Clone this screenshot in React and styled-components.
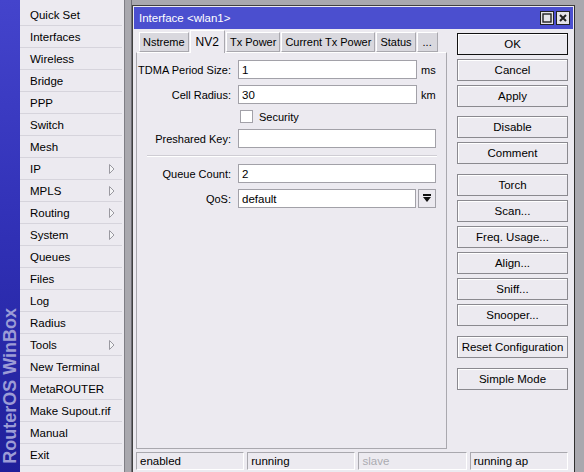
import React from "react";
import styled, { createGlobalStyle } from "styled-components";

const Global = createGlobalStyle`
  html, body { margin: 0; padding: 0; }
  body {
    width: 584px;
    height: 472px;
    overflow: hidden;
    font-family: "Liberation Sans", Arial, sans-serif;
    font-size: 11px;
    color: #000;
  }
`;

const Screen = styled.div`
  display: flex;
  width: 584px;
  height: 472px;
  overflow: hidden;
`;

const Brand = styled.div`
  width: 20px;
  flex: none;
  background: linear-gradient(180deg, #4444cc 0%, #3232b8 45%, #1f1f9a 100%);
  display: flex;
  align-items: flex-end;
  justify-content: center;
  padding-bottom: 8px;
  box-sizing: border-box;
`;

const BrandText = styled.span`
  writing-mode: vertical-rl;
  transform: rotate(180deg);
  font-size: 18px;
  font-weight: bold;
  color: #9c9cd6;
  white-space: nowrap;
`;

const Menu = styled.div`
  width: 104px;
  flex: none;
  background: #eceaf0;
  padding: 4px 2px 0 0;
  box-sizing: border-box;
`;

const MenuItem = styled.div`
  height: 22px;
  box-sizing: border-box;
  border-bottom: 1px solid #d6d4dc;
  display: flex;
  align-items: center;
  justify-content: space-between;
  padding: 0 7px 0 10px;
  white-space: nowrap;
  font-size: 11.5px;
`;

const Gutter = styled.div`
  width: 8px;
  flex: none;
  background: #a9a8ae;
  border-left: 1px solid #7f7e85;
  border-right: 1px solid #6f6e75;
  box-sizing: border-box;
`;

const Desktop = styled.div`
  flex: 1;
  background: #a9a8ae;
  padding-top: 5px;
  box-sizing: border-box;
`;

const Window = styled.div`
  width: 443px;
  height: 470px;
  box-sizing: border-box;
  border: 1px solid #404040;
  border-right-color: #303030;
  background: #eceaf0;
  padding: 1px;
  display: flex;
  flex-direction: column;
`;

const TitleBar = styled.div`
  height: 22px;
  flex: none;
  background: #4b4fcf;
  color: #fff;
  display: flex;
  align-items: center;
  justify-content: space-between;
  padding: 0 3px 0 5px;
`;

const TitleText = styled.span`
  font-size: 11.5px;
`;

const TitleButtons = styled.div`
  display: flex;
  gap: 2px;
`;

const TitleButton = styled.div`
  width: 14px;
  height: 14px;
  box-sizing: border-box;
  background: #e4e3e8;
  border: 1px solid #222;
  display: flex;
  align-items: center;
  justify-content: center;
`;

const Body = styled.div`
  display: grid;
  grid-template-columns: 311px 111px;
  grid-template-rows: 419px 18px;
  column-gap: 10px;
  row-gap: 3px;
  padding: 1px 0 0 2px;
`;

const Main = styled.div`
  display: flex;
  flex-direction: column;
`;

const Tabs = styled.div`
  display: flex;
  align-items: flex-end;
  height: 22px;
  flex: none;
  padding-left: 3px;
  position: relative;
  z-index: 1;
`;

const Tab = styled.div`
  height: ${(p) => (p.$active ? "23px" : "20px")};
  box-sizing: border-box;
  padding: 0 ${(p) => p.$pad || 3}px;
  margin-bottom: ${(p) => (p.$active ? "-1px" : "0")};
  background: ${(p) => (p.$active ? "#eceaf0" : "#d9d8de")};
  border: 1px solid #a9a8ae;
  border-bottom: ${(p) => (p.$active ? "none" : "1px solid #a9a8ae")};
  border-top-color: #fff;
  border-left-color: #fff;
  margin-right: 1px;
  display: flex;
  align-items: center;
  white-space: nowrap;
  font-size: ${(p) => (p.$active ? "12px" : "11px")};
`;

const Panel = styled.div`
  flex: 1;
  border: 1px solid #a9a8ae;
  border-top-color: #fff;
  padding: 7px 9px 0 0;
  display: flex;
  flex-direction: column;
`;

const Row = styled.div`
  display: flex;
  align-items: center;
  height: ${(p) => p.$h || 19}px;
  margin-bottom: ${(p) => p.$mb ?? 6}px;
  font-size: 11px;
`;

const Label = styled.div`
  width: 98px;
  flex: none;
  text-align: right;
  padding-right: 4px;
  box-sizing: border-box;
  white-space: nowrap;
`;

const Input = styled.div`
  width: ${(p) => p.$w || 198}px;
  height: 19px;
  box-sizing: border-box;
  background: #fff;
  border: 1px solid #a2a1a8;
  padding: 0 3px;
  display: flex;
  align-items: center;
  margin-left: 3px;
  font-size: 11.5px;
`;

const Unit = styled.span`
  margin-left: 4px;
  font-size: 11px;
`;

const Check = styled.div`
  width: 13px;
  height: 13px;
  box-sizing: border-box;
  background: #fff;
  border: 1px solid #a2a1a8;
  margin: 0 6px 0 5px;
`;

const Separator = styled.div`
  height: 1px;
  flex: none;
  background: #cfcdd4;
  border-bottom: 1px solid #fff;
  margin: 0 0 7px 10px;
`;

const DropButton = styled.div`
  width: 18px;
  height: 19px;
  box-sizing: border-box;
  border: 1px solid #a2a1a8;
  background: #eceaf0;
  margin-left: 2px;
  display: flex;
  align-items: center;
  justify-content: center;
`;

const Buttons = styled.div`
  display: flex;
  flex-direction: column;
  padding-top: 3px;
`;

const Button = styled.div`
  height: 22px;
  flex: none;
  box-sizing: border-box;
  border: 1px solid ${(p) => (p.$default ? "#111" : "#8a898f")};
  box-shadow: inset 1px 1px #fff;
  background: #eceaf0;
  display: flex;
  align-items: center;
  justify-content: center;
  margin-bottom: ${(p) => p.$mb || 4}px;
  white-space: nowrap;
  font-size: 11.5px;
`;

const Status = styled.div`
  grid-column: 1 / span 2;
  display: flex;
  gap: 3px;
`;

const StatusCell = styled.div`
  width: ${(p) => p.$w || 109}px;
  height: 18px;
  box-sizing: border-box;
  border: 1px solid #fff;
  border-top-color: #a9a8ae;
  border-left-color: #a9a8ae;
  padding: 0 3px;
  display: flex;
  align-items: center;
  font-size: 11.5px;
  color: ${(p) => (p.$dim ? "#ababb0" : "#000")};
`;

const menu = [
  ["Quick Set"], ["Interfaces"], ["Wireless"], ["Bridge"], ["PPP"], ["Switch"],
  ["Mesh"], ["IP", true], ["MPLS", true], ["Routing", true], ["System", true],
  ["Queues"], ["Files"], ["Log"], ["Radius"], ["Tools", true], ["New Terminal"],
  ["MetaROUTER"], ["Make Supout.rif"], ["Manual"], ["Exit"],
];

const Arrow = () => (
  <svg width="6" height="10" viewBox="0 0 6 10">
    <path d="M0.5 0.5 L5 5 L0.5 9.5 Z" fill="#f4f4f6" stroke="#9a99a0" strokeWidth="1" />
  </svg>
);

export default function App() {
  return (
    <Screen>
      <Global />
      <Brand>
        <BrandText>RouterOS WinBox</BrandText>
      </Brand>
      <Menu>
        {menu.map(([name, sub]) => (
          <MenuItem key={name}>
            {name}
            {sub && <Arrow />}
          </MenuItem>
        ))}
      </Menu>
      <Gutter />
      <Desktop>
        <Window>
          <TitleBar>
            <TitleText>Interface &lt;wlan1&gt;</TitleText>
            <TitleButtons>
              <TitleButton>
                <svg width="10" height="10" viewBox="0 0 10 10">
                  <rect x="1" y="1" width="8" height="8" fill="none" stroke="#222" strokeWidth="1.4" />
                </svg>
              </TitleButton>
              <TitleButton>
                <svg width="10" height="10" viewBox="0 0 10 10">
                  <path d="M2 2 L8 8 M8 2 L2 8" stroke="#222" strokeWidth="2" />
                </svg>
              </TitleButton>
            </TitleButtons>
          </TitleBar>
          <Body>
            <Main>
              <Tabs>
                <Tab>Nstreme</Tab>
                <Tab $active $pad={5}>NV2</Tab>
                <Tab>Tx Power</Tab>
                <Tab>Current Tx Power</Tab>
                <Tab>Status</Tab>
                <Tab $pad={5}>...</Tab>
              </Tabs>
              <Panel>
                <Row>
                  <Label>TDMA Period Size:</Label>
                  <Input $w={179}>1</Input>
                  <Unit>ms</Unit>
                </Row>
                <Row>
                  <Label>Cell Radius:</Label>
                  <Input $w={179}>30</Input>
                  <Unit>km</Unit>
                </Row>
                <Row $h={13} $mb={6}>
                  <Label />
                  <Check />
                  Security
                </Row>
                <Row $mb={7}>
                  <Label>Preshared Key:</Label>
                  <Input />
                </Row>
                <Separator />
                <Row>
                  <Label>Queue Count:</Label>
                  <Input>2</Input>
                </Row>
                <Row>
                  <Label>QoS:</Label>
                  <Input $w={178}>default</Input>
                  <DropButton>
                    <svg width="8" height="9" viewBox="0 0 8 9">
                      <rect x="0" y="0" width="8" height="2" fill="#111" />
                      <path d="M0 3 L8 3 L4 8 Z" fill="#111" />
                    </svg>
                  </DropButton>
                </Row>
              </Panel>
            </Main>
            <Buttons>
              <Button $default>OK</Button>
              <Button>Cancel</Button>
              <Button $mb={9}>Apply</Button>
              <Button>Disable</Button>
              <Button $mb={10}>Comment</Button>
              <Button>Torch</Button>
              <Button>Scan...</Button>
              <Button>Freq. Usage...</Button>
              <Button>Align...</Button>
              <Button>Sniff...</Button>
              <Button $mb={10}>Snooper...</Button>
              <Button $mb={10}>Reset Configuration</Button>
              <Button>Simple Mode</Button>
            </Buttons>
            <Status>
              <StatusCell>enabled</StatusCell>
              <StatusCell>running</StatusCell>
              <StatusCell $dim>slave</StatusCell>
              <StatusCell $w={99}>running ap</StatusCell>
            </Status>
          </Body>
        </Window>
      </Desktop>
    </Screen>
  );
}
